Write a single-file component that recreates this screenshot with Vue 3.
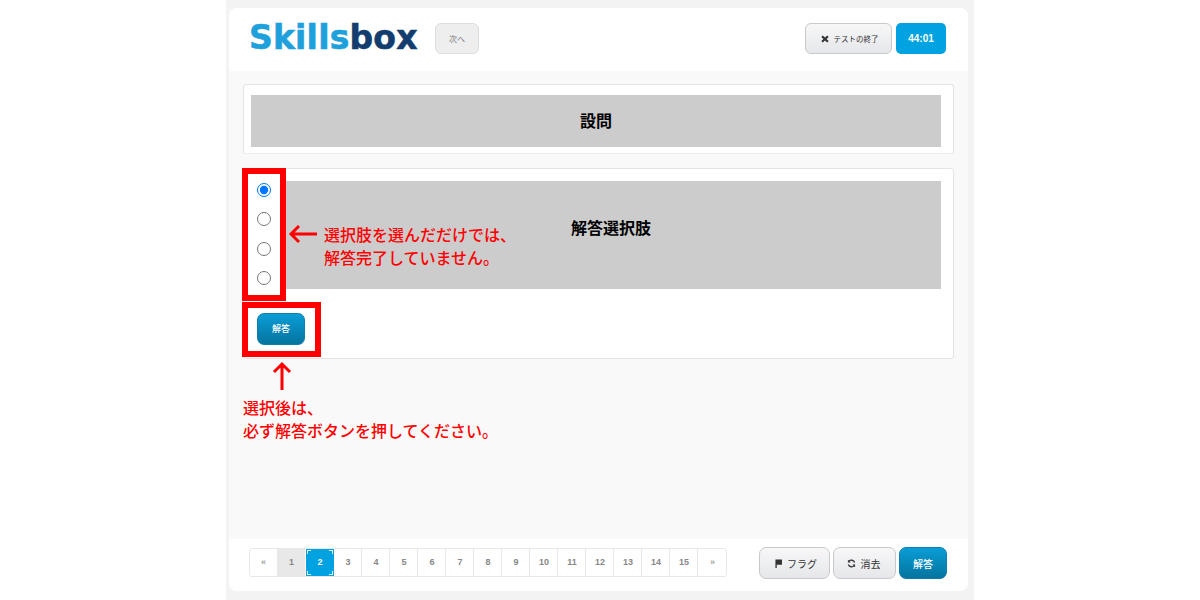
<script setup>
const pages = Array.from({ length: 15 }, (_, i) => i + 1)
</script>

<template>
  <div class="shell">
    <main class="window">
      <header class="top">
        <div class="logo"><span class="logo-a">Skills</span><span class="logo-b">box</span></div>
        <button class="btn next">次へ</button>
        <div class="spacer"></div>
        <button class="btn silver end">
          <svg class="ico" viewBox="0 0 10 10" width="8" height="8"><path d="M2.2 0.6 5 3.2 7.8 0.6 9.6 2.4 6.9 5 9.6 7.6 7.8 9.4 5 6.8 2.2 9.4 0.4 7.6 3.1 5 0.4 2.4Z" fill="#333"/></svg>
          <span>テストの終了</span>
        </button>
        <div class="timer">44:01</div>
      </header>

      <section class="content">
        <div class="card question">
          <div class="gray q-gray">設問</div>
        </div>
        <div class="card answer">
          <div class="answer-row">
            <div class="radios">
              <input type="radio" name="a" checked />
              <input type="radio" name="a" />
              <input type="radio" name="a" />
              <input type="radio" name="a" />
            </div>
            <div class="gray a-gray">解答選択肢</div>
          </div>
          <button class="blue answer-btn">解答</button>

          <div class="mark mark-radios"></div>
          <div class="mark mark-btn"></div>
          <svg class="arrow arrow-left" viewBox="0 0 30 20" width="30" height="20"><path d="M29 10H3M11 2 3 10 11 18" fill="none" stroke="#f00" stroke-width="3"/></svg>
          <p class="note note-right">選択肢を選んだだけでは、<br />解答完了していません。</p>
        </div>
        <svg class="arrow arrow-up" viewBox="0 0 20 30" width="20" height="30"><path d="M10 29V3M2 11 10 3 18 11" fill="none" stroke="#f00" stroke-width="3"/></svg>
        <p class="note note-below">選択後は、<br />必ず解答ボタンを押してください。</p>
      </section>

      <footer class="bottom">
        <nav class="pager">
          <span class="page arrows">«</span>
          <span v-for="p in pages" :key="p" class="page" :class="{ done: p === 1, current: p === 2 }">
            {{ p }}
            <template v-if="p === 2">
              <i class="corner tl"></i><i class="corner tr"></i><i class="corner bl"></i><i class="corner br"></i>
            </template>
          </span>
          <span class="page arrows">»</span>
        </nav>
        <div class="spacer"></div>
        <button class="btn silver flag">
          <svg class="ico" viewBox="0 0 8 10" width="7" height="9"><path d="M0.5 0.5H8V6.5H2V10H0.5Z" fill="#333"/></svg>
          <span>フラグ</span>
        </button>
        <button class="btn silver clear">
          <svg class="ico" viewBox="0 0 12 12" width="9" height="9"><path d="M10.2 4.6A4.4 4.4 0 0 0 2.6 3.2M1.8 7.4A4.4 4.4 0 0 0 9.4 8.8" fill="none" stroke="#333" stroke-width="1.8"/><path d="M1.2 1 1.2 4.8 5 4.8ZM10.8 11 10.8 7.2 7 7.2Z" fill="#333"/></svg>
          <span>消去</span>
        </button>
        <button class="blue submit">解答</button>
      </footer>
    </main>
  </div>
</template>

<style scoped>
.shell {
  width: 748px;
  height: 600px;
  margin: 0 auto;
  box-sizing: border-box;
  padding: 8px 6px 9px 3px;
  background: #f3f3f3;
  font-family: "Liberation Sans", "Noto Sans CJK JP", sans-serif;
}
.window {
  height: 583px;
  display: flex;
  flex-direction: column;
  border-radius: 8px;
  overflow: hidden;
  background: #fff;
}
.top {
  height: 63px;
  flex: none;
  display: flex;
  align-items: flex-start;
  box-sizing: border-box;
  padding: 15px 22px 0 20px;
  background: #fff;
}
.logo {
  width: 186px;
  height: 30px;
  line-height: 30px;
  font-family: "DejaVu Sans", sans-serif;
  font-weight: 700;
  font-size: 33px;
  letter-spacing: 0.2px;
  -webkit-text-stroke: 0.6px currentColor;
  white-space: nowrap;
}
.logo-a { color: #1ea0dc; }
.logo-b { color: #123d6e; }
.spacer { flex: 1; }
.btn {
  padding: 0;
  font-family: inherit;
  color: #333;
  border: 1px solid #d4d4d6;
  border-radius: 6px;
  display: inline-flex;
  align-items: center;
  justify-content: center;
  gap: 5px;
}
.next {
  width: 44px;
  height: 31px;
  background: #eee;
  border-color: #dedede;
  color: #777;
  font-size: 8px;
}
.silver {
  background: linear-gradient(#f7f7f8, #e6e7ea);
  border-color: #c9c9cb;
}
.end {
  width: 87px;
  height: 31px;
  padding-left: 2px;
  font-size: 7.5px;
}
.timer {
  width: 50px;
  height: 31px;
  margin-left: 4px;
  border-radius: 5px;
  background: #00a2e0;
  color: #fff;
  font-size: 10px;
  font-weight: 700;
  line-height: 31px;
  text-align: center;
}
.content {
  position: relative;
  flex: 1;
  box-sizing: border-box;
  padding: 13px 14px 0;
  background: #f9f9f9;
}
.card {
  background: #fff;
  border: 1px solid #e4e4e4;
  box-sizing: border-box;
}
.question {
  height: 70px;
  padding: 10px 12px 0 7px;
  border-radius: 3px 3px 0 0;
  border-bottom-color: #eee;
}
.gray {
  background: #ccc;
  color: #000;
  font-weight: 700;
  display: flex;
  align-items: center;
  justify-content: center;
}
.q-gray {
  height: 52px;
  box-sizing: border-box;
  padding-bottom: 2px;
  font-size: 16px;
}
.answer {
  position: relative;
  height: 191px;
  margin-top: 14px;
  padding: 12px 12px 0 13px;
  border-radius: 3px;
}
.answer-row {
  display: flex;
  height: 108px;
}
.radios {
  width: 24px;
  display: flex;
  flex-direction: column;
  padding-top: 2px;
  gap: 15.4px;
}
.radios input {
  width: 14px;
  height: 14px;
  margin: 0;
}
.a-gray {
  flex: 1;
  font-size: 16px;
  padding-bottom: 16px;
}
.blue {
  padding: 0;
  border: 1px solid #0b7fae;
  border-radius: 7px;
  color: #fff;
  font-family: inherit;
  font-weight: 500;
  font-size: 10px;
  background: linear-gradient(#0a9dd6, #04749f);
}
.answer-btn {
  display: block;
  width: 48px;
  height: 32px;
  margin-top: 24px;
  padding-bottom: 1px;
  font-size: 9px;
}
.mark {
  position: absolute;
  box-sizing: border-box;
  border: 6px solid #f00;
}
.mark-radios {
  left: -2px;
  top: -1px;
  width: 44px;
  height: 133px;
}
.mark-btn {
  left: -2px;
  top: 133px;
  width: 79px;
  height: 55px;
}
.arrow {
  position: absolute;
}
.arrow-left {
  left: 44px;
  top: 55px;
}
.arrow-up {
  left: 43px;
  top: 290px;
}
.note {
  position: absolute;
  margin: 0;
  color: #f00;
  font-weight: 500;
  font-size: 16px;
  line-height: 23px;
  white-space: nowrap;
}
.note-right {
  left: 80px;
  top: 55px;
}
.note-below {
  left: 14px;
  top: 326px;
}
.bottom {
  height: 52px;
  flex: none;
  display: flex;
  align-items: flex-start;
  box-sizing: border-box;
  padding: 8px 21px 0 20px;
  background: #fff;
}
.pager {
  display: flex;
  margin-top: 1px;
  border: 1px solid #e8e8e8;
  border-radius: 3px;
  height: 29px;
  box-sizing: border-box;
}
.page {
  position: relative;
  width: 28px;
  box-sizing: border-box;
  padding-left: 1px;
  border-right: 1px solid #e8e8e8;
  color: #888;
  font-size: 9px;
  font-weight: 700;
  line-height: 27px;
  text-align: center;
}
.page:first-child { width: 27px; border-right: 0; padding-left: 0; }
.page:last-child { border-right: 0; }
.arrows { color: #777; font-weight: 400; }
.done {
  background: #e8e8e8;
  padding-left: 2px;
}
.current {
  background: #00a2e0;
  color: #fff;
  border-right: 0;
  margin-left: 1px;
  padding-left: 0;
}
.corner {
  position: absolute;
  width: 3px;
  height: 3px;
  border: 0 solid #e6f7ff;
}
.tl { left: 1px; top: 1px; border-width: 1.5px 0 0 1.5px; }
.tr { right: 1px; top: 1px; border-width: 1.5px 1.5px 0 0; }
.bl { left: 1px; bottom: 1px; border-width: 0 0 1.5px 1.5px; }
.br { right: 1px; bottom: 1px; border-width: 0 1.5px 1.5px 0; }
.flag {
  width: 71px;
  height: 32px;
  padding-left: 3px;
  font-size: 10px;
  border-radius: 7px;
}
.clear {
  width: 63px;
  height: 32px;
  margin-left: 3px;
  padding-right: 2px;
  font-size: 10px;
  border-radius: 7px;
}
.submit {
  width: 48px;
  height: 32px;
  margin-left: 3px;
}
</style>

<style>
html, body { background: #fff; }
</style>
